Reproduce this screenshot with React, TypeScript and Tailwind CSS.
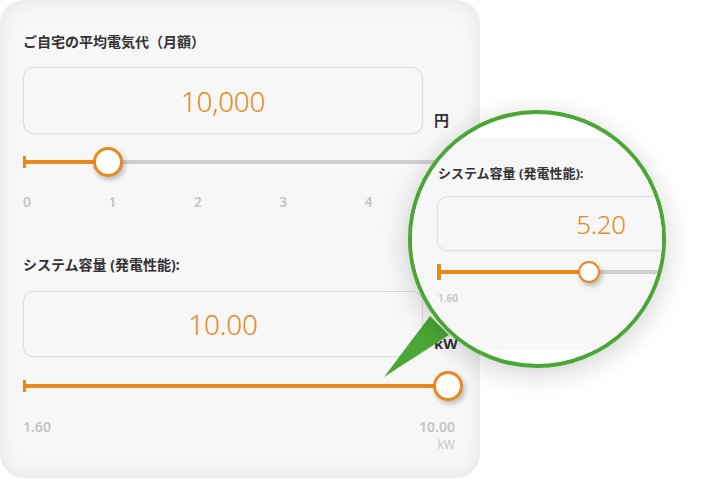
import React from "react";

const FONT = { fontFamily: '"Noto Sans", "Noto Sans CJK JP", sans-serif' };

function Thumb({ size = "w-[30px] h-[30px]", border = "border-[3px]", margin = "-mx-[15px]" }: { size?: string; border?: string; margin?: string }) {
  return (
    <div
      className={`${size} ${border} ${margin} relative z-10 shrink-0 rounded-full border-[#e8891b] bg-white shadow-[2px_3px_5px_rgba(0,0,0,0.25)]`}
    />
  );
}

function ValueBox({ value, h = "h-[67px]", w = "w-[400px]", text = "text-[28px]" }: { value: string; h?: string; w?: string; text?: string }) {
  return (
    <div
      className={`${w} ${h} shrink-0 rounded-[11px] border-[1.5px] border-[#dcdcdc] bg-[#f7f7f7] flex items-center justify-center shadow-[0_1px_2px_rgba(0,0,0,0.05)]`}
    >
      <span className={`${text} font-light text-[#e8891b] leading-none tracking-[-0.3px]`}>{value}</span>
    </div>
  );
}

export default function App() {
  return (
    <div className="relative w-[721px] h-[480px] bg-white overflow-hidden" style={FONT}>
      {/* Main card */}
      <div className="w-[480px] h-[478px] rounded-[24px] bg-[#f7f7f7] shadow-[inset_0_0_22px_rgba(0,0,0,0.08)] px-[23px] pt-[32px] flex flex-col">
        <div className="text-[14px] leading-[20px] font-bold text-[#333]">ご自宅の平均電気代（月額）</div>

        <div className="mt-[15px] flex items-end gap-[11px]">
          <ValueBox value="10,000" />
          <span className="pb-[4px] text-[15px] leading-[20px] font-bold text-[#333]">円</span>
        </div>

        {/* slider 1 */}
        <div className="mt-[13px] w-[425px] h-[30px] flex items-center">
          <div className="w-[3px] h-[12px] bg-[#e8891b]" />
          <div className="w-[82px] h-[4px] bg-[#e8891b]" />
          <Thumb />
          <div className="flex-1 h-[4px] bg-[#cfcfcf]" />
        </div>

        <div className="mt-[17px] w-[435px] flex justify-between text-[14px] leading-[16px] font-semibold text-[#c4c4c4]">
          <span>0</span>
          <span>1</span>
          <span>2</span>
          <span>3</span>
          <span>4</span>
          <span>5</span>
        </div>

        <div className="mt-[45px] text-[14px] leading-[20px] font-bold text-[#333]">システム容量 (発電性能):</div>

        <div className="mt-[16px] flex items-end gap-[11px]">
          <ValueBox value="10.00" h="h-[66px]" />
          <span className="pb-[4px] text-[15px] leading-[20px] font-bold text-[#333]">kW</span>
        </div>

        {/* slider 2 */}
        <div className="mt-[14px] w-[425px] h-[30px] flex items-center">
          <div className="w-[3px] h-[12px] bg-[#e8891b]" />
          <div className="flex-1 h-[4px] bg-[#e8891b]" />
          <Thumb margin="-ml-[15px] -mr-[15px]" />
        </div>

        <div className="mt-[17px] w-[432px] flex justify-between">
          <span className="text-[14px] leading-[18px] font-semibold text-[#c4c4c4]">1.60</span>
          <div className="flex flex-col items-end">
            <span className="text-[14px] leading-[18px] font-semibold text-[#c4c4c4]">10.00</span>
            <span className="text-[12px] leading-[18px] text-[#c8c8c8]">kW</span>
          </div>
        </div>
      </div>

      {/* Pointer */}
      <svg className="absolute left-0 top-0" width="721" height="480" viewBox="0 0 721 480">
        <polygon points="384,377 430,316 449,335" fill="#4aa735" />
      </svg>

      {/* Magnifier */}
      <div className="absolute left-[408px] top-[110px] w-[258px] h-[258px] rounded-full border-[4px] border-[#4aa735] bg-white overflow-hidden shadow-[0_6px_28px_rgba(0,0,0,0.18)]">
        <div className="mt-[23px] h-[213px] w-[400px] bg-[#f7f7f7] pl-[25px] pt-[28px] flex flex-col">
          <div className="text-[13px] leading-[16px] font-bold text-[#333] pl-[1px]">システム容量 (発電性能):</div>
          <div className="mt-[15px]">
            <ValueBox value="5.20" h="h-[55px]" w="w-[328px]" text="text-[26px]" />
          </div>
          <div className="mt-[10px] w-[340px] h-[21px] flex items-center">
            <div className="w-[4px] h-[16px] bg-[#e8891b]" />
            <div className="w-[148px] h-[4px] bg-[#e8891b]" />
            <Thumb size="w-[22px] h-[22px]" border="border-[2.5px]" margin="-mx-[11px]" />
            <div className="flex-1 h-[4px] bg-[#cfcfcf]" />
          </div>
          <div className="mt-[10px] text-[10px] leading-[13px] font-semibold text-[#c4c4c4] pl-[1px]">1.60</div>
        </div>
      </div>
    </div>
  );
}
